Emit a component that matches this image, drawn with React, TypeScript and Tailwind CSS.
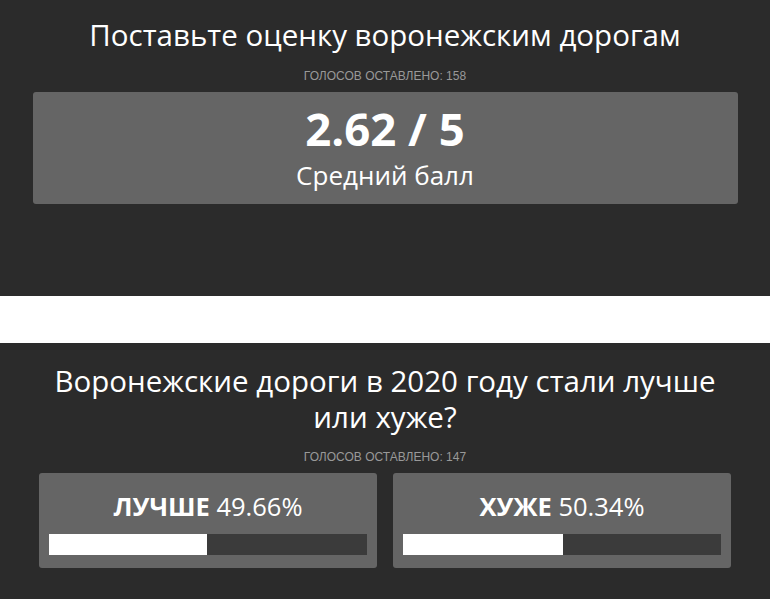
import React from "react";

const options = [
  { label: "ЛУЧШЕ", percent: 49.66 },
  { label: "ХУЖЕ", percent: 50.34 },
];

const VoteCount = ({ count }: { count: number }) => (
  <p className="text-[12px] uppercase text-[#999] font-['Liberation_Sans',Arial,sans-serif] leading-none">
    Голосов оставлено: {count}
  </p>
);

export default function App() {
  return (
    <div className="min-h-[599px] bg-white font-['Open_Sans',sans-serif] text-white">
      {/* Rating */}
      <section className="h-[296px] bg-[#2b2b2b] flex flex-col items-center pt-[16px]">
        <h2 className="text-[29.5px] leading-[38px] text-center">Поставьте оценку воронежским дорогам</h2>
        <div className="mt-[16px]">
          <VoteCount count={158} />
        </div>
        <div className="mt-[10px] w-[705px] h-[112px] bg-[#656565] rounded-[3px] flex flex-col items-center pt-[6px]">
          <span className="text-[45.5px] font-bold leading-[60px]">2.62 / 5</span>
          <span className="text-[26px] leading-[34px]">Средний балл</span>
        </div>
      </section>

      <div className="h-[47px]" />

      {/* Poll */}
      <section className="h-[256px] bg-[#2b2b2b] flex flex-col items-center pt-[20px]">
        <h2 className="w-[690px] text-[29.5px] leading-[36px] text-center">
          Воронежские дороги в 2020 году стали лучше или хуже?
        </h2>
        <div className="mt-[16px]">
          <VoteCount count={147} />
        </div>
        <div className="mt-[10px] flex gap-[16px]">
          {options.map((o) => (
            <div key={o.label} className="w-[338px] h-[95px] bg-[#656565] rounded-[3px] px-[10px] pt-[16px]">
              <p className="text-[25.5px] leading-[34px] text-center">
                <span className="font-bold">{o.label}</span> {o.percent.toFixed(2)}%
              </p>
              <div className="mt-[11px] h-[21px] bg-[#3b3b3b]">
                <div className="h-full bg-white" style={{ width: `${o.percent}%` }} />
              </div>
            </div>
          ))}
        </div>
      </section>
    </div>
  );
}
